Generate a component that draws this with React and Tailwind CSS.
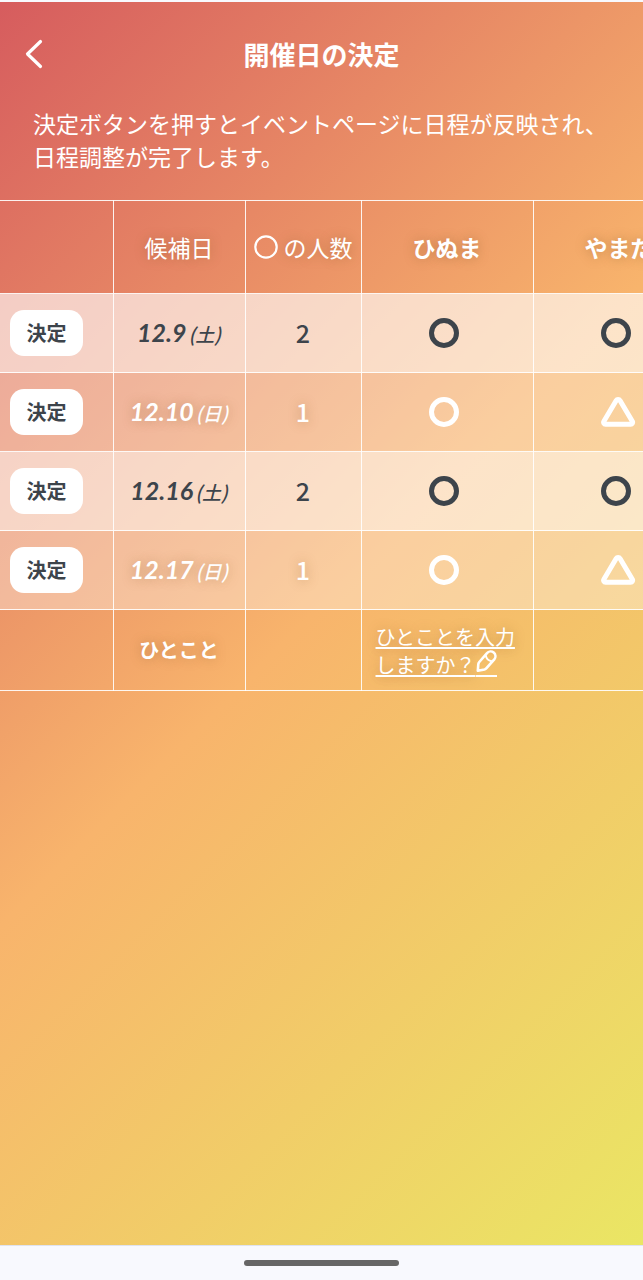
import React from 'react'

const members = ['ひぬま', 'やまだ']

const dates = [
    { day: '12.9', week: '土', count: 2, best: true, answers: ['ok', 'ok'] },
    { day: '12.10', week: '日', count: 1, best: false, answers: ['ok', 'maybe'] },
    { day: '12.16', week: '土', count: 2, best: true, answers: ['ok', 'ok'] },
    { day: '12.17', week: '日', count: 1, best: false, answers: ['ok', 'maybe'] },
]

const glow = '[text-shadow:0_0_12px_rgba(130,80,30,0.4)]'

const Mark = ({ type }) => (
    <svg className="mx-auto" width="36" height="32" viewBox="0 0 36 32" fill="none" stroke="currentColor" strokeWidth="5">
        {type === 'ok' ? (
            <circle cx="15" cy="16" r="12.5" />
        ) : (
            <path d="M15.200 4.500a2.200 2.200 0 0 1 3.800 0L31.300 25.300a1.900 1.900 0 0 1-1.600 2.900H4.500A1.900 1.900 0 0 1 2.900 25.300Z" strokeLinejoin="round" />
        )}
    </svg>
)

const Pencil = () => (
    <svg className="inline-block align-baseline" width="21" height="23" viewBox="0 0 21 23" fill="none" stroke="currentColor" strokeWidth="2.6" strokeLinejoin="round" strokeLinecap="round">
        <path d="M1.800 20.800L2.300 14.200Q2.500 13 3.300 12L11 3.200A4.700 4.700 0 0 1 18.300 9.300L10.500 18.200Q9.700 19.100 8.500 19.400Z" />
        <path d="M9.800 5.600Q10.600 10.200 15.600 11.200" strokeWidth="2" />
    </svg>
)

const Header = () => (
    <header className="grid grid-cols-[1fr_auto_1fr] items-center px-6 pt-[30px] text-white">
        <button type="button" aria-label="戻る" className="w-5">
            <svg width="20" height="30" viewBox="0 0 20 30" fill="none" stroke="currentColor" strokeWidth="3.2" strokeLinecap="round" strokeLinejoin="round">
                <path d="M16.500 2.500L3.500 15L16.500 27.500" />
            </svg>
        </button>
        <h1 className="text-[26px] leading-11 font-bold">開催日の決定</h1>
    </header>
)

const DateTable = () => (
    <div className="overflow-x-auto [scrollbar-width:none]">
        <table className="w-[705px] table-fixed border-collapse text-center text-white [&_td]:border [&_td]:border-white/90 [&_th]:border [&_th]:border-white/90 [&_tr>*:first-child]:border-l-0">
            <colgroup>
                <col className="w-[113px]" />
                <col className="w-[132px]" />
                <col className="w-[116px]" />
                <col className="w-[172px]" />
                <col className="w-[172px]" />
            </colgroup>
            <thead>
                <tr className={`h-[93px] text-[23px] ${glow}`}>
                    <td></td>
                    <th className="font-normal">候補日</th>
                    <th className="font-normal">
                        <span className="flex items-center justify-center gap-[6px] whitespace-nowrap">
                            <svg width="24" height="24" viewBox="0 0 24 24" fill="none" stroke="currentColor" strokeWidth="2.2" role="img" aria-label="丸">
                                <circle cx="12" cy="12" r="10.700" />
                            </svg>
                            の人数
                        </span>
                    </th>
                    {members.map(name => (
                        <th key={name} className="font-bold">{name}</th>
                    ))}
                </tr>
            </thead>
            <tbody>
                {dates.map(date => (
                    <tr key={date.day} className={`h-[79px] ${date.best ? 'bg-white/63 text-[#3d444b]' : 'bg-white/35'}`}>
                        <td className="text-left">
                            <button type="button" className="ml-[10px] h-[46px] w-[73px] rounded-[14px] bg-white text-xl font-bold text-[#3d444b]">
                                決定
                            </button>
                        </td>
                        <td className={`italic whitespace-nowrap ${date.best ? '' : glow}`}>
                            <span className="font-[Lato] text-[25px] font-bold">{date.day}</span>
                            <span className="ml-[2px] font-['Noto_Sans_CJK_JP',sans-serif] text-[19px] font-medium">({date.week})</span>
                        </td>
                        <td className={`text-[25px] font-medium ${date.best ? '' : glow}`}>{date.count}</td>
                        {date.answers.map((answer, i) => (
                            <td key={i}><Mark type={answer} /></td>
                        ))}
                    </tr>
                ))}
                <tr className={`h-[81px] text-xl ${glow}`}>
                    <td></td>
                    <th className="font-bold">ひとこと</th>
                    <td></td>
                    <td className="px-[14px] text-left leading-[27px]">
                        <a href="#comment" className="inline-block underline decoration-2 underline-offset-2">
                            ひとことを入力しますか？<span className="inline-block border-b-2 leading-none"><Pencil /></span>
                        </a>
                    </td>
                    <td></td>
                </tr>
            </tbody>
        </table>
    </div>
)

const App = () => {
    return (
        <div className="flex min-h-screen flex-col bg-[#f8f9fe] font-['Noto_Sans_CJK_JP',sans-serif]">
            <main className="mt-[2px] flex-1 bg-[linear-gradient(135deg,#d65c5e_0%,#f8b46c_49%,#eae664_100%)]">
                <Header />
                <p className="px-[33px] pt-[31px] pb-[27px] text-[23px] leading-[33px] text-white">
                    決定ボタンを押すとイベントページに日程が反映され、日程調整が完了します。
                </p>
                <DateTable />
            </main>
            <footer className="flex justify-center border-t border-[#dfe3f0] pt-[14px] pb-[14px]">
                <div className="h-[6px] w-[155px] rounded-full bg-[#666666]"></div>
            </footer>
        </div>
    )
}

export default App
